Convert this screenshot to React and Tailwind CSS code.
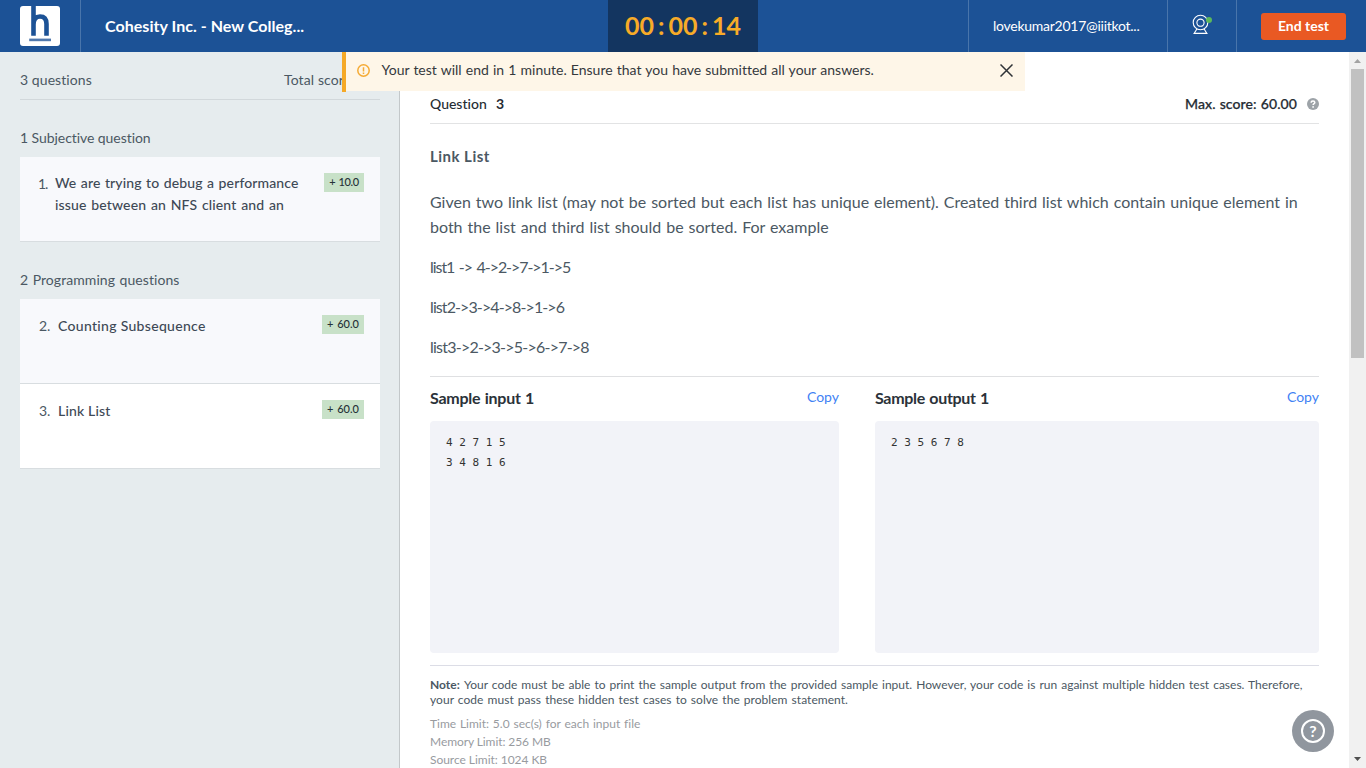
import React from "react";

const timer = ["0", "0", ":", "0", "0", ":", "1", "4"];

function HackerEarthLogo() {
  return (
    <svg className="size-10 shrink-0" viewBox="0 0 40 40">
      <rect width="40" height="40" rx="3" fill="#fff" />
      <path d="M13.500 0V29.700M13.500 18.500C13.500 13 15.600 10.500 20 10.500C24.600 10.500 26.500 13 26.500 18V29.700" fill="none" stroke="#1c5296" strokeWidth="4.600" />
      <path d="M9.200 33.900H31" stroke="#5078ad" strokeWidth="2.600" />
    </svg>
  );
}

function WebcamIcon() {
  return (
    <svg className="ml-[24px] mt-[13px] h-[22px] w-[22px]" viewBox="0 0 22 22" fill="none" stroke="#fff">
      <circle cx="8.500" cy="9.500" r="7.300" strokeWidth="1.100" />
      <circle cx="8.500" cy="9.700" r="3.600" strokeWidth="1.100" />
      <path d="M4.900 16L2.100 20.400H14.900L12.100 16" strokeWidth="1.100" />
      <circle cx="17" cy="7" r="3" fill="#5cb85c" stroke="none" />
    </svg>
  );
}

function Badge({ children, className }) {
  return <span className={"mr-4 mt-4 flex h-[19px] shrink-0 items-center justify-center bg-[#c8e1c8] pb-px text-[11px] font-medium leading-[18px] text-[#263238] [word-spacing:1px] " + className}>{children}</span>;
}

function Header() {
  return (
    <header className="flex h-[52px] shrink-0 bg-[#1c5296] text-white">
      <div className="flex w-[81px] items-center border-r border-[#4975ab] pl-5"><HackerEarthLogo /></div>
      <div className="w-[527px] pl-6 pt-[14px] text-base font-bold leading-6 tracking-[0.04px]">Cohesity Inc. - New Colleg...</div>
      <div className="flex w-[150px] items-center bg-[#133560] pl-[17px] text-[25px] font-bold text-[#f7ab28]">
        {timer.map((c, i) => (
          <span key={i} className={c === "1" ? "w-[14.5px] pr-1 text-center" : "w-[14.5px] text-center"}>{c}</span>
        ))}
      </div>
      <div className="w-[210px]" />
      <div className="w-[200px] border-x border-[#4975ab] pl-6 pt-4 text-sm leading-5 tracking-[-0.26px]">lovekumar2017@iiitkot...</div>
      <div className="w-[69px] border-r border-[#4975ab]"><WebcamIcon /></div>
      <button className="ml-6 mt-[13px] h-[27px] w-[85px] rounded-[3px] bg-[#e95923] pb-px text-sm font-bold leading-[26px]">End test</button>
    </header>
  );
}

function Sidebar() {
  return (
    <aside className="w-[400px] shrink-0 border-r border-[#c3c8ca] bg-[#e6ecee] pl-5 pr-[19px] text-sm text-[#4b5863]">
      <div className="flex h-12 justify-between border-b border-[#d2d8db] pt-[18px] leading-5">
        <span className="tracking-[0.07px]">3 questions</span>
        <span className="w-24 whitespace-nowrap tracking-[0.11px]">Total score</span>
      </div>
      <h2 className="mt-[27px] leading-[22px] tracking-[-0.06px]">1 Subjective question</h2>
      <div className="mt-2 flex h-[85px] border-b border-[#d8dde0] bg-[#f8f9fc]">
        <span className="ml-[18px] mt-4 w-[17px] shrink-0 leading-[22px] tracking-[-1px]">1.</span>
        <p className="mt-[15px] w-[269px] font-medium leading-[22px] text-[#3e4956]">
          <span className="block whitespace-nowrap tracking-[0.12px] [word-spacing:0.78px]">We are trying to debug a performance</span>
          <span className="block whitespace-nowrap tracking-[0.15px] [word-spacing:1px]">issue between an NFS client and an</span>
        </p>
        <Badge className="w-10 tracking-[-0.4px]">+ 10.0</Badge>
      </div>
      <h2 className="mt-[27px] leading-[22px] tracking-[0.07px] [word-spacing:0.8px]">2 Programming questions</h2>
      <div className="mt-2 flex h-[85px] border-b border-[#d8dde0] bg-[#f8f9fc]">
        <span className="ml-[19px] mt-4 w-[19px] shrink-0 leading-[22px]">2.</span>
        <p className="mt-4 w-[264px] font-medium leading-[22px] tracking-[0.31px] text-[#3e4956]">Counting Subsequence</p>
        <Badge className="w-[42px]">+ 60.0</Badge>
      </div>
      <div className="flex h-[85px] border-b border-[#d8dde0] bg-white">
        <span className="ml-[19px] mt-4 w-[19px] shrink-0 leading-[22px]">3.</span>
        <p className="mt-4 w-[264px] font-medium leading-[22px] tracking-[0.17px] text-[#3e4956]">Link List</p>
        <Badge className="w-[42px]">+ 60.0</Badge>
      </div>
    </aside>
  );
}

function Sample({ title, titleClass, className, children }) {
  return (
    <div className={className}>
      <div className="flex h-[44px] justify-between pt-[9px]">
        <h4 className={"text-base font-bold leading-6 text-[#2b3239] [word-spacing:0.8px] " + titleClass}>{title}</h4>
        <a className="mt-[1px] text-sm leading-5 text-[#3f82f4]">Copy</a>
      </div>
      <pre className="h-[232px] rounded-[4px] bg-[#f2f3f8] px-4 pt-3 font-['DejaVu_Sans_Mono',monospace] text-[11px] leading-5 text-[#333]">{children}</pre>
    </div>
  );
}

function Question() {
  return (
    <main className="h-full w-[949px] overflow-hidden bg-white pl-[30px] pr-[30px] text-[#4b5863]">
      <div className="flex h-[72px] border-b border-[#e2e3e4] pt-[42px] text-sm font-medium leading-5 text-[#252c33]">
        <span className="w-[66px]">Question</span>
        <span className="grow font-bold">3</span>
        <span className="tracking-[0.1px] [word-spacing:0.4px] [-webkit-text-stroke:0.25px_#252c33]">Max. score: 60.00</span>
        <svg className="ml-[10px] mt-1 size-3" viewBox="0 0 12 12">
          <circle cx="6" cy="6" r="6" fill="#9da3a8" />
          <path d="M4.200 4.700C4.200 3.500 5 3 6 3C7.100 3 7.800 3.700 7.800 4.500C7.800 5.700 6.100 5.600 6.100 7.100" fill="none" stroke="#fff" strokeWidth="1.500" />
          <circle cx="6.100" cy="8.900" r=".9" fill="#fff" />
        </svg>
      </div>
      <h3 className="mt-5 text-[15px] font-bold leading-6 tracking-[0.48px]">Link List</h3>
      <div className="mt-[21px] whitespace-nowrap text-base leading-[25px]">
        <p>
          <span className="block [word-spacing:0.78px]">Given two link list (may not be sorted but each list has unique element). Created third list which contain unique element in</span>
          <span className="block [word-spacing:0.84px]">both the list and third list should be sorted. For example</span>
        </p>
        <p className="mt-[15px] tracking-[-1.05px] [word-spacing:1.5px]">list1 -&gt; 4-&gt;2-&gt;7-&gt;1-&gt;5</p>
        <p className="mt-[15px] tracking-[-0.9px]">list2-&gt;3-&gt;4-&gt;8-&gt;1-&gt;6</p>
        <p className="mt-[15px] tracking-[-0.77px]">list3-&gt;2-&gt;3-&gt;5-&gt;6-&gt;7-&gt;8</p>
      </div>
      <div className="mt-[17px] flex justify-between border-t border-[#dfe0e2]">
        <Sample className="w-[409px]" title="Sample input 1" titleClass="tracking-[-0.25px]">{"4 2 7 1 5\n3 4 8 1 6"}</Sample>
        <Sample className="w-[444px]" title="Sample output 1" titleClass="tracking-[-0.31px]">2 3 5 6 7 8</Sample>
      </div>
      <div className="mt-3 whitespace-nowrap border-t border-[#dcdde6] pt-[11px] text-xs leading-[15px]">
        <p>
          <span className="flex gap-1"><b className="w-[30px]">Note:</b><span className="[word-spacing:0.96px]">Your code must be able to print the sample output from the provided sample input. However, your code is run against multiple hidden test cases. Therefore,</span></span>
          <span className="block tracking-[0.04px] [word-spacing:0.95px]">your code must pass these hidden test cases to solve the problem statement.</span>
        </p>
        <ul className="mt-2 leading-[18px] text-[#989b9f]">
          <li className="[word-spacing:0.75px]">Time Limit: 5.0 sec(s) for each input file</li>
          <li className="tracking-[-0.08px]">Memory Limit: 256 MB</li>
          <li className="tracking-[-0.04px]">Source Limit: 1024 KB</li>
        </ul>
      </div>
    </main>
  );
}

function Scrollbar() {
  return (
    <div className="flex w-[17px] shrink-0 flex-col items-center bg-[#f1f1f1]">
      <svg className="h-[17px] w-[17px] shrink-0" viewBox="0 0 17 17"><path d="M5 11L8.500 7L12 11Z" fill="#a3a3a3" /></svg>
      <div className="h-[289px] w-[13px] bg-[#c1c1c1]" />
      <svg className="mt-auto h-[17px] w-[17px] shrink-0" viewBox="0 0 17 17"><path d="M5 6L8.500 10L12 6Z" fill="#505050" /></svg>
    </div>
  );
}

export default function App() {
  return (
    <div className="relative flex h-[768px] w-[1366px] flex-col overflow-hidden bg-white font-[Lato,sans-serif] [font-variant-ligatures:none]">
      <Header />
      <div className="flex min-h-0 flex-1">
        <Sidebar />
        <Question />
        <Scrollbar />
      </div>
      <div className="absolute left-[342px] top-[52px] flex h-[39px] w-[683px] bg-[#fef6e8] text-sm text-[#35393d]">
        <div className="h-10 w-1 shrink-0 bg-[#f5a927]" />
        <svg className="ml-[11px] mt-[11.500px] size-[13px]" viewBox="0 0 13 13" fill="none" stroke="#f5ab35" strokeWidth="1.500">
          <circle cx="6.500" cy="6.500" r="5.700" />
          <path d="M6.500 3.300V7.400M6.500 8.500V9.900" />
        </svg>
        <span className="ml-[11.500px] mt-[7px] grow leading-[22px] [word-spacing:0.55px]">Your test will end in 1 minute. Ensure that you have submitted all your answers.</span>
        <svg className="mr-3 mt-3 size-[13px]" viewBox="0 0 13 13" stroke="#2f3337" strokeWidth="1.500"><path d="M.5 .5L12.500 12.500M12.500 .5L.5 12.500" /></svg>
      </div>
      <button className="absolute left-[1292px] top-[710px] flex size-[42px] items-center justify-center rounded-full bg-[#90969e]">
        <span className="flex size-6 items-center justify-center rounded-full border-2 border-white text-base font-bold leading-5 text-white">?</span>
      </button>
    </div>
  );
}
